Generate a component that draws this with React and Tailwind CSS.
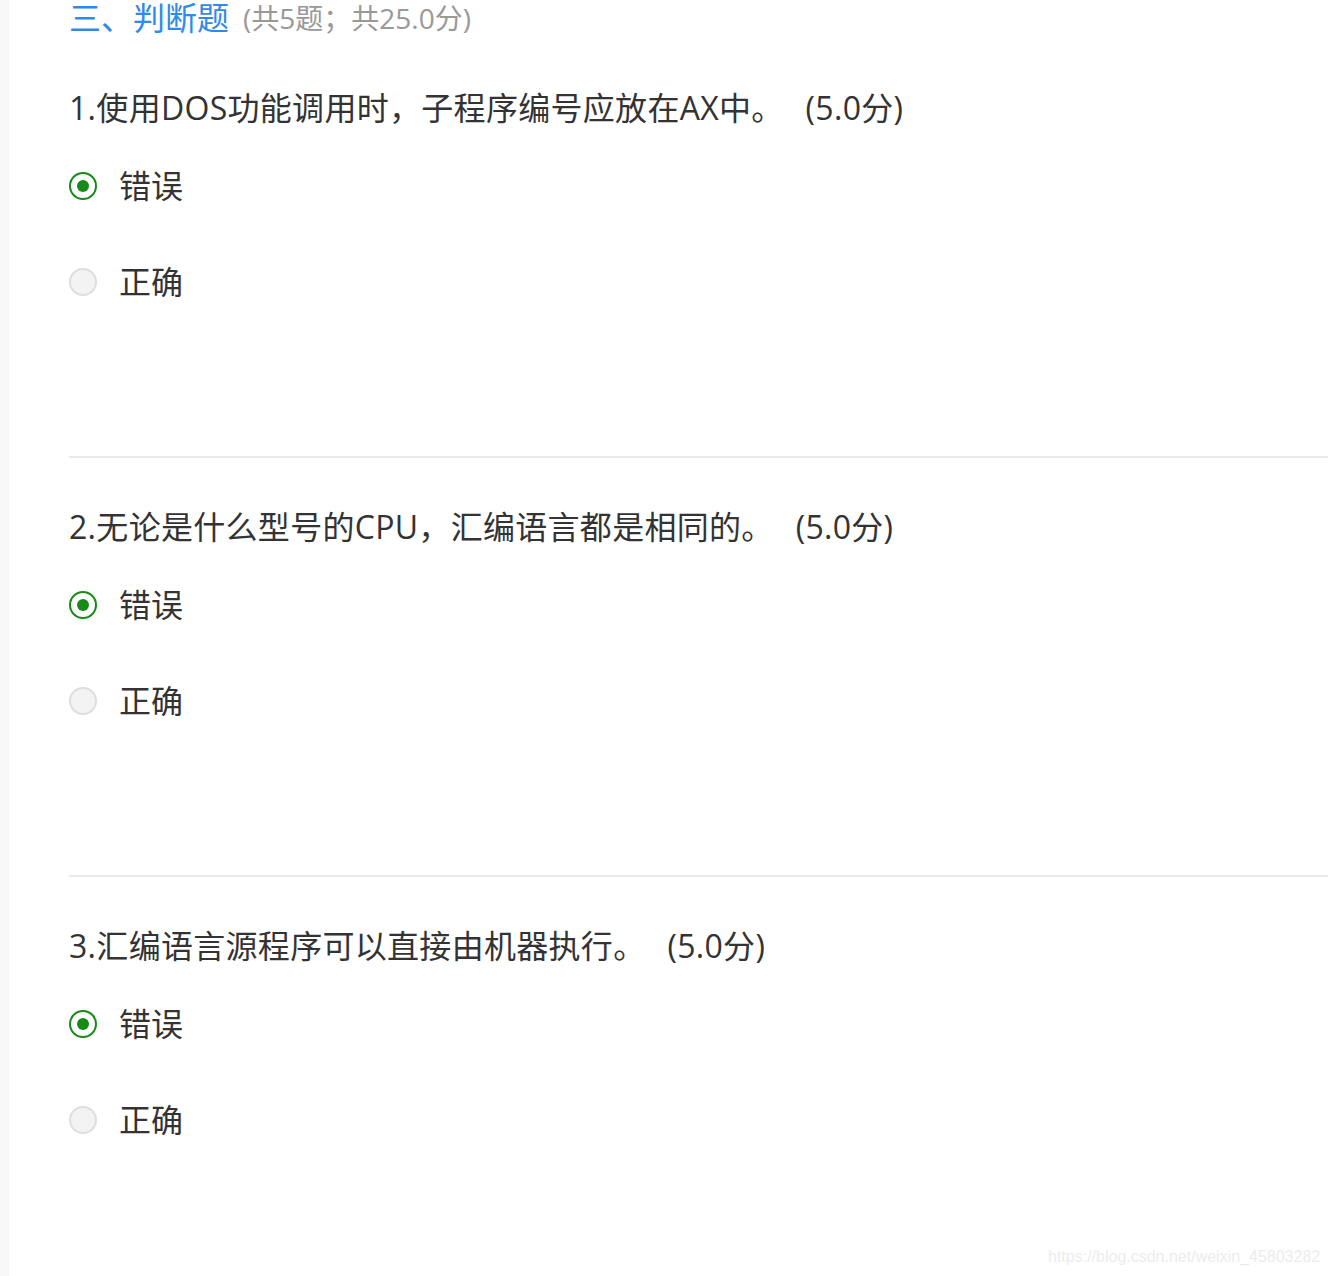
const questions = [
  { no: 1, text: "使用DOS功能调用时，子程序编号应放在AX中。" },
  { no: 2, text: "无论是什么型号的CPU，汇编语言都是相同的。" },
  { no: 3, text: "汇编语言源程序可以直接由机器执行。" },
];

function Radio({ checked }) {
  if (checked) {
    return (
      <span className="flex h-[28px] w-[28px] shrink-0 items-center justify-center rounded-full border-2 border-[#188a18] bg-white">
        <span className="h-[12px] w-[12px] rounded-full bg-[#188a18]" />
      </span>
    );
  }
  return <span className="h-[28px] w-[28px] shrink-0 rounded-full border-2 border-[#dedede] bg-[#f3f3f3]" />;
}

function Option({ label, checked }) {
  return (
    <div className="flex h-[40px] items-center">
      <Radio checked={checked} />
      <span className="ml-[22px] text-[32px] leading-[40px] text-[#333]">{label}</span>
    </div>
  );
}

export default function App() {
  return (
    <div
      className="relative flex h-[1276px] overflow-hidden bg-white"
      style={{ fontFamily: '"Open Sans", "Noto Sans CJK SC", sans-serif' }}
    >
      <div className="w-[9px] shrink-0 bg-[#f8f8f8]" />
      <div className="flex-1 pl-[60px]">
        {/* Section header */}
        <div className="flex h-[36px] items-center">
          <span className="text-[32px] leading-[36px] text-[#2f8ae8]">三、判断题</span>
          <span className="ml-[14px] text-[28px] leading-[36px] text-[#999]">(共5题；共25.0分)</span>
        </div>

        {questions.map((q, i) => (
          <div key={q.no}>
            {i > 0 && <div className="h-[2px] bg-[#ebebeb]" />}
            <div className={i === 0 ? "mt-[52px]" : "mt-[49px]"}>
              <div className="text-[32px] leading-[40px] tracking-[0.3px] text-[#333]">
                {q.no}.{q.text}
                <span className="ml-[22px]">(5.0分)</span>
              </div>
              <div className="mt-[38px] flex flex-col gap-[56px]">
                <Option label="错误" checked />
                <Option label="正确" />
              </div>
              {i < questions.length - 1 && <div className="h-[154px]" />}
            </div>
          </div>
        ))}
      </div>

      <div
        className="absolute left-[1048px] top-[1247px] whitespace-nowrap text-[16px] leading-[20px] text-[#ececec]"
        style={{ fontFamily: '"Liberation Sans", sans-serif' }}
      >
        https://blog.csdn.net/weixin_45803282
      </div>
    </div>
  );
}
